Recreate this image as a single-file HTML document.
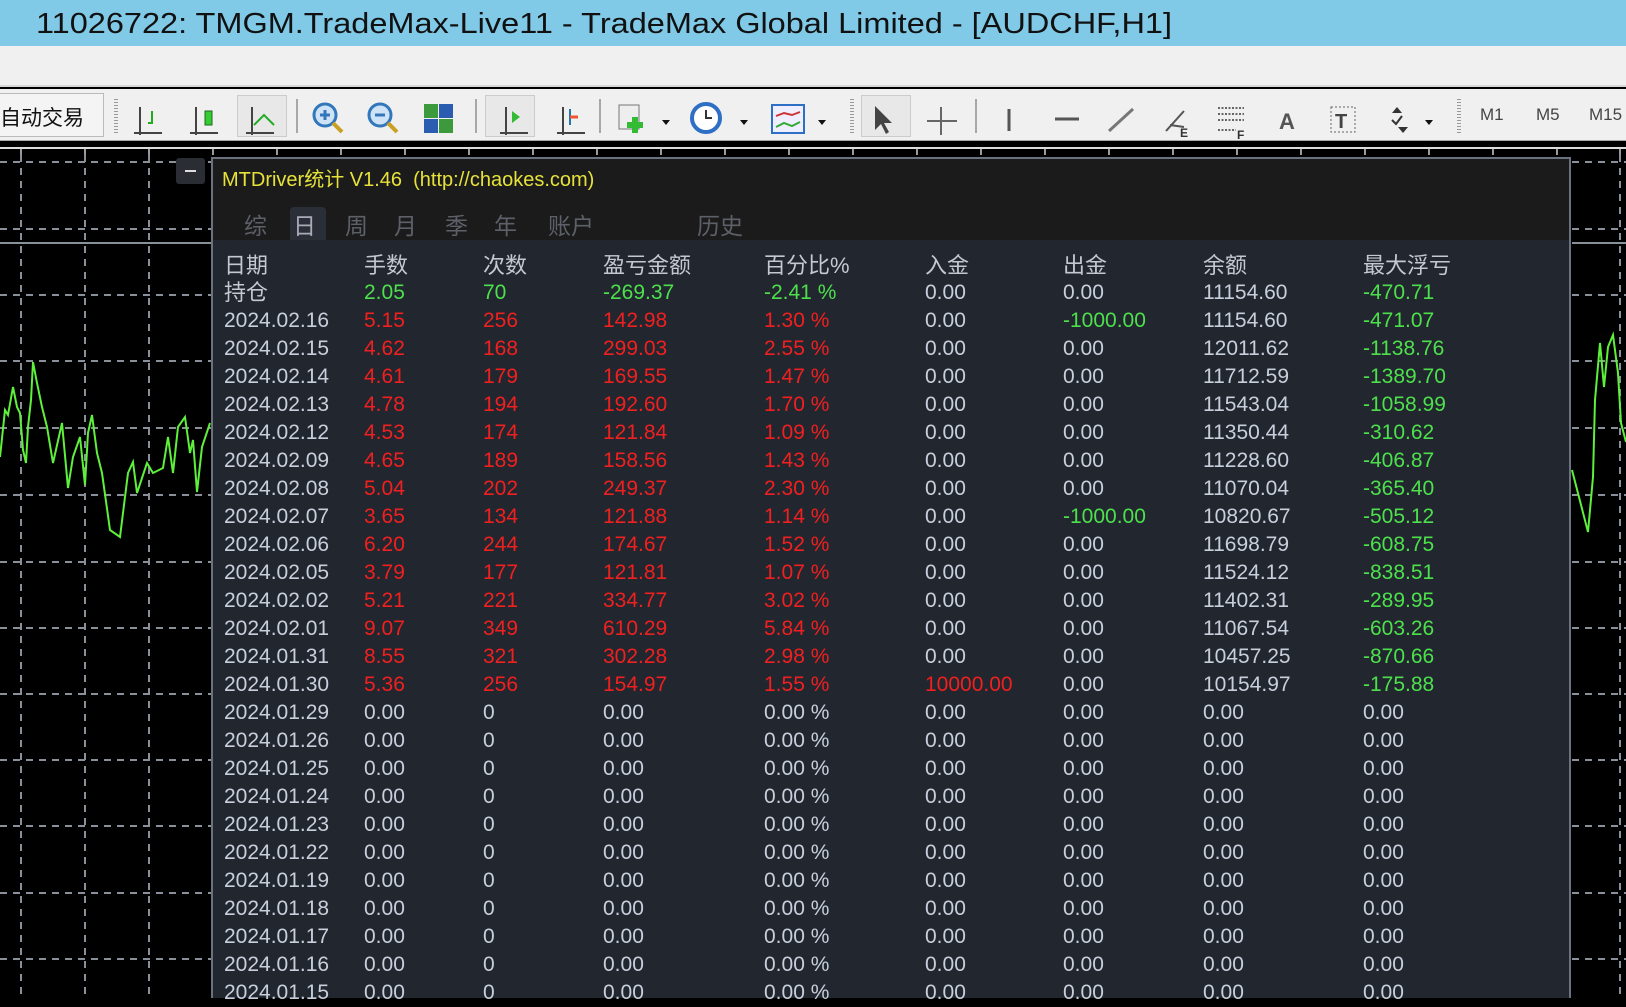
<!DOCTYPE html>
<html><head><meta charset="utf-8">
<style>
*{margin:0;padding:0;box-sizing:border-box}
body{width:1626px;height:998px;overflow:hidden;background:#000;position:relative;font-family:"Liberation Sans","Noto Sans CJK SC",sans-serif}
#title{position:absolute;left:0;top:0;width:1626px;height:46px;background:#80c9e7}
#menu{position:absolute;left:0;top:46px;width:1626px;height:41px;background:#f0f0f0;border-bottom:2px solid #d8d8d8}
#tb{position:absolute;left:0;top:89px;width:1626px;height:52px;background:#f0f0f0;border-bottom:1px solid #aaa}
.sep{position:absolute;top:10px;width:2px;height:34px;background:#a8a8a8}
.grip{position:absolute;top:10px;width:4px;height:36px;background:repeating-linear-gradient(#999 0 1px,transparent 1px 3px)}
.press{position:absolute;top:6px;width:50px;height:42px;border:1px solid #ccc;background:#e8e8e8}
.ic{position:absolute;top:0}
.mt{position:absolute;top:16px;font-size:17px;color:#444}
#panel{position:absolute;left:211px;top:157px;width:1360px;height:841px;background:#22262e;border-left:2px solid #6a7280;border-top:2px solid #6a7280;border-right:2px solid #6a7280}
#phead{position:absolute;left:0;top:0;width:100%;height:81px;background:#1b1b1b}
#ptitle{position:absolute;left:9px;top:4px;font-size:20px;color:#e6e23a;white-space:nowrap}
.tab{position:absolute;top:48px;font-size:23px;color:#5d6068}
.row{position:absolute;left:0;height:28px;line-height:28px;font-size:21px;color:#c8cfdc;white-space:nowrap}
.row span{position:absolute;top:0}
.c0{left:11px}.c1{left:151px}.c2{left:270px}.c3{left:390px}.c4{left:551px}.c5{left:712px}.c6{left:850px}.c7{left:990px}.c8{left:1150px}
.r{color:#f02020}.g{color:#4de04d}.h{color:#c4c8d0;font-size:22px}
</style></head><body>
<div id="title"><svg width="1626" height="46"><text x="36" y="33" font-family="Liberation Sans" font-size="29" fill="#111" textLength="1136" lengthAdjust="spacingAndGlyphs">11026722: TMGM.TradeMax-Live11 - TradeMax Global Limited - [AUDCHF,H1]</text></svg></div>
<div id="menu"></div>
<div id="tb">
 <div style="position:absolute;left:0;top:4px;width:104px;height:44px;border:1px solid #bbb;border-left:none;background:#f4f4f4"></div>
 <div style="position:absolute;left:0;top:13px;font-size:21px;color:#111">自动交易</div>
 <div class="grip" style="left:114px"></div>
 <div class="press" style="left:237px"></div>
 <div class="sep" style="left:296px"></div>
 <div class="sep" style="left:475px"></div>
 <div class="press" style="left:485px"></div>
 <div class="sep" style="left:599px"></div>
 <div class="grip" style="left:850px"></div>
 <div class="press" style="left:861px"></div>
 <div class="sep" style="left:975px"></div>
 <div class="grip" style="left:1457px"></div>
 <svg class="ic" width="1626" height="52">
  <g stroke="#444" stroke-width="2" fill="none">
   <path d="M140 18v28M134 44h28"/><path d="M196 18v28M190 44h28"/><path d="M252 18v28M246 44h28"/>
   <path d="M506 18v28M500 44h28"/><path d="M563 18v28M557 44h28"/>
   <path d="M1009 20v22" stroke="#555" stroke-width="3"/><path d="M1055 30h24" stroke="#555" stroke-width="3"/>
   <path d="M1109 42l24 -22" stroke="#777" stroke-width="3"/>
   <path d="M941 18v28M927 32h30" stroke="#666"/>
  </g>
  <path d="M152 22v12h-4" stroke="#2a2" stroke-width="2" fill="none"/>
  <rect x="205" y="22" width="7" height="14" fill="#3c3" stroke="#262"/>
  <path d="M254 36l10-10 10 10" stroke="#2a2" stroke-width="2" fill="none"/>
  <circle cx="325" cy="26" r="11" fill="#cfe3f6" stroke="#3377bb" stroke-width="3"/><path d="M320 26h10M325 21v10" stroke="#3377bb" stroke-width="3"/><path d="M333 34l9 9" stroke="#c9a020" stroke-width="4"/>
  <circle cx="380" cy="26" r="11" fill="#cfe3f6" stroke="#3377bb" stroke-width="3"/><path d="M375 26h10" stroke="#3377bb" stroke-width="3"/><path d="M388 34l9 9" stroke="#c9a020" stroke-width="4"/>
  <rect x="424" y="15" width="14" height="14" fill="#3c9a3c"/><rect x="439" y="15" width="14" height="14" fill="#2a5db0"/><rect x="424" y="30" width="14" height="14" fill="#2a5db0"/><rect x="439" y="30" width="14" height="14" fill="#3c9a3c"/>
  <path d="M512 22l8 6-8 6z" fill="#3b3"/>
  <path d="M570 20v16" stroke="#27a" stroke-width="2"/><path d="M578 28h-8" stroke="#e53" stroke-width="3"/>
  <rect x="619" y="16" width="20" height="24" fill="#eee" stroke="#777"/><path d="M635 28v16M627 36h16" stroke="#3b3" stroke-width="6"/>
  <path d="M662 31l4 5 4-5z M740 31l4 5 4-5z M818 31l4 5 4-5z M1425 31l4 5 4-5z" fill="#111"/>
  <circle cx="706" cy="29" r="14" fill="#fff" stroke="#2d6fc4" stroke-width="4"/><path d="M706 21v8h6" stroke="#333" stroke-width="2" fill="none"/>
  <rect x="772" y="16" width="32" height="28" fill="#eef" stroke="#2d6fc4" stroke-width="2"/><path d="M776 27l8-3 8 2 8-3" stroke="#c33" stroke-width="2" fill="none"/><path d="M776 38l8-4 8 3 8-4" stroke="#3a3" stroke-width="2" fill="none"/>
  <path d="M875 17v24l6-6 5 10 3-2-5-9h8z" fill="#444"/>
  <path d="M1166 42l18-20M1170 36l14 2" stroke="#555" stroke-width="2"/><text x="1180" y="48" font-size="12" fill="#333" font-weight="bold">E</text>
  <path d="M1218 19h26M1218 25h26M1218 31h26M1218 41h18" stroke="#666" stroke-dasharray="2 1.5" stroke-width="2"/><text x="1237" y="50" font-size="12" fill="#333" font-weight="bold">F</text>
  <text x="1279" y="40" font-size="22" font-weight="bold" fill="#555">A</text>
  <rect x="1331" y="18" width="24" height="25" fill="none" stroke="#666" stroke-dasharray="2 2"/><text x="1335" y="39" font-size="20" font-weight="bold" fill="#444">T</text>
  <path d="M1392 24l5-6 5 6zM1398 38l5 6 5-6z" fill="#333"/><path d="M1392 31l4 4 6-8" stroke="#333" stroke-width="2" fill="none"/>
 </svg>
 <div class="mt" style="left:1480px">M1</div><div class="mt" style="left:1536px">M5</div><div class="mt" style="left:1589px">M15</div>
</div>
<svg style="position:absolute;left:0;top:141px" width="1626" height="857">
 <rect width="1626" height="857" fill="#000"/>
 <line x1="0" y1="7" x2="1626" y2="7" stroke="#ddd" stroke-width="2"/>
 <g stroke="#ccc" stroke-width="1.5">
  <path d="M21 8v6M85 8v6M149 8v6M213 8v6M277 8v6M341 8v6M405 8v6M469 8v6M533 8v6M597 8v6M661 8v6M725 8v6M789 8v6M853 8v6M917 8v6M981 8v6M1045 8v6M1109 8v6M1173 8v6M1237 8v6M1301 8v6M1365 8v6M1429 8v6M1493 8v6M1557 8v6M1620 8v6"/>
 </g>
 <g stroke="#8a909a" stroke-width="2" stroke-dasharray="7 6">
  <path d="M21 14V857M85 14V857M149 14V857M1620 14V857"/>
  <path d="M0 21H211M0 88H211M0 154H211M0 220H211M0 287H211M0 354H211M0 421H211M0 487H211M0 553H211M0 619H211M0 685H211M0 752H211M0 818H211"/>
  <path d="M1572 21H1626M1572 88H1626M1572 154H1626M1572 220H1626M1572 287H1626M1572 354H1626M1572 421H1626M1572 487H1626M1572 553H1626M1572 619H1626M1572 685H1626M1572 752H1626M1572 818H1626"/>
 </g>
 <path d="M0 102H211M1572 102H1626" stroke="#8a909a" stroke-width="2"/>
 <polyline transform="translate(0,-141)" fill="none" stroke="#5ef03a" stroke-width="2" points="0,457 5,410 8,415 13,387 17,407 20,413 23,450 26,463 28,427 31,400 33,362 37,383 42,407 47,427 53,463 62,423 68,488 73,457 80,437 85,485 88,433 92,415 97,453 102,473 110,530 120,537 128,473 133,462 137,493 147,463 153,473 163,468 168,437 173,473 178,427 185,417 190,453 193,440 197,492 202,447 210,423"/>
 <polyline transform="translate(0,-141)" fill="none" stroke="#5ef03a" stroke-width="2" points="1572,470 1588,532 1593,477 1595,400 1600,343 1604,387 1608,347 1613,335 1618,373 1621,423 1626,442"/>
</svg>
<div style="position:absolute;left:176px;top:158px;width:29px;height:26px;background:#2a2d33;border-radius:3px"><div style="position:absolute;left:9px;top:12px;width:11px;height:2px;background:#ddd"></div></div>
<div id="panel">
 <div id="phead">
  <div id="ptitle">MTDriver统计 V1.46&nbsp;&nbsp;(http://chaokes.com)</div>
  <div style="position:absolute;left:77px;top:48px;width:36px;height:33px;background:#2a2e36;border-radius:4px 4px 0 0"></div>
  <div class="tab" style="left:31px">综</div><div class="tab" style="left:80px;color:#aab">日</div><div class="tab" style="left:132px">周</div><div class="tab" style="left:181px">月</div><div class="tab" style="left:232px">季</div><div class="tab" style="left:281px">年</div><div class="tab" style="left:335px">账户</div><div class="tab" style="left:484px">历史</div>
 </div>
 <div class="row h" style="top:93px"><span class="c0">日期</span><span class="c1">手数</span><span class="c2">次数</span><span class="c3">盈亏金额</span><span class="c4">百分比%</span><span class="c5">入金</span><span class="c6">出金</span><span class="c7">余额</span><span class="c8">最大浮亏</span></div>
 <div class="row" style="top:120px"><span class="c0 h">持仓</span><span class="c1 g">2.05</span><span class="c2 g">70</span><span class="c3 g">-269.37</span><span class="c4 g">-2.41 %</span><span class="c5">0.00</span><span class="c6">0.00</span><span class="c7">11154.60</span><span class="c8 g">-470.71</span></div>
 <div class="row" style="top:148px"><span class="c0">2024.02.16</span><span class="c1 r">5.15</span><span class="c2 r">256</span><span class="c3 r">142.98</span><span class="c4 r">1.30 %</span><span class="c5">0.00</span><span class="c6 g">-1000.00</span><span class="c7">11154.60</span><span class="c8 g">-471.07</span></div>
 <div class="row" style="top:176px"><span class="c0">2024.02.15</span><span class="c1 r">4.62</span><span class="c2 r">168</span><span class="c3 r">299.03</span><span class="c4 r">2.55 %</span><span class="c5">0.00</span><span class="c6">0.00</span><span class="c7">12011.62</span><span class="c8 g">-1138.76</span></div>
 <div class="row" style="top:204px"><span class="c0">2024.02.14</span><span class="c1 r">4.61</span><span class="c2 r">179</span><span class="c3 r">169.55</span><span class="c4 r">1.47 %</span><span class="c5">0.00</span><span class="c6">0.00</span><span class="c7">11712.59</span><span class="c8 g">-1389.70</span></div>
 <div class="row" style="top:232px"><span class="c0">2024.02.13</span><span class="c1 r">4.78</span><span class="c2 r">194</span><span class="c3 r">192.60</span><span class="c4 r">1.70 %</span><span class="c5">0.00</span><span class="c6">0.00</span><span class="c7">11543.04</span><span class="c8 g">-1058.99</span></div>
 <div class="row" style="top:260px"><span class="c0">2024.02.12</span><span class="c1 r">4.53</span><span class="c2 r">174</span><span class="c3 r">121.84</span><span class="c4 r">1.09 %</span><span class="c5">0.00</span><span class="c6">0.00</span><span class="c7">11350.44</span><span class="c8 g">-310.62</span></div>
 <div class="row" style="top:288px"><span class="c0">2024.02.09</span><span class="c1 r">4.65</span><span class="c2 r">189</span><span class="c3 r">158.56</span><span class="c4 r">1.43 %</span><span class="c5">0.00</span><span class="c6">0.00</span><span class="c7">11228.60</span><span class="c8 g">-406.87</span></div>
 <div class="row" style="top:316px"><span class="c0">2024.02.08</span><span class="c1 r">5.04</span><span class="c2 r">202</span><span class="c3 r">249.37</span><span class="c4 r">2.30 %</span><span class="c5">0.00</span><span class="c6">0.00</span><span class="c7">11070.04</span><span class="c8 g">-365.40</span></div>
 <div class="row" style="top:344px"><span class="c0">2024.02.07</span><span class="c1 r">3.65</span><span class="c2 r">134</span><span class="c3 r">121.88</span><span class="c4 r">1.14 %</span><span class="c5">0.00</span><span class="c6 g">-1000.00</span><span class="c7">10820.67</span><span class="c8 g">-505.12</span></div>
 <div class="row" style="top:372px"><span class="c0">2024.02.06</span><span class="c1 r">6.20</span><span class="c2 r">244</span><span class="c3 r">174.67</span><span class="c4 r">1.52 %</span><span class="c5">0.00</span><span class="c6">0.00</span><span class="c7">11698.79</span><span class="c8 g">-608.75</span></div>
 <div class="row" style="top:400px"><span class="c0">2024.02.05</span><span class="c1 r">3.79</span><span class="c2 r">177</span><span class="c3 r">121.81</span><span class="c4 r">1.07 %</span><span class="c5">0.00</span><span class="c6">0.00</span><span class="c7">11524.12</span><span class="c8 g">-838.51</span></div>
 <div class="row" style="top:428px"><span class="c0">2024.02.02</span><span class="c1 r">5.21</span><span class="c2 r">221</span><span class="c3 r">334.77</span><span class="c4 r">3.02 %</span><span class="c5">0.00</span><span class="c6">0.00</span><span class="c7">11402.31</span><span class="c8 g">-289.95</span></div>
 <div class="row" style="top:456px"><span class="c0">2024.02.01</span><span class="c1 r">9.07</span><span class="c2 r">349</span><span class="c3 r">610.29</span><span class="c4 r">5.84 %</span><span class="c5">0.00</span><span class="c6">0.00</span><span class="c7">11067.54</span><span class="c8 g">-603.26</span></div>
 <div class="row" style="top:484px"><span class="c0">2024.01.31</span><span class="c1 r">8.55</span><span class="c2 r">321</span><span class="c3 r">302.28</span><span class="c4 r">2.98 %</span><span class="c5">0.00</span><span class="c6">0.00</span><span class="c7">10457.25</span><span class="c8 g">-870.66</span></div>
 <div class="row" style="top:512px"><span class="c0">2024.01.30</span><span class="c1 r">5.36</span><span class="c2 r">256</span><span class="c3 r">154.97</span><span class="c4 r">1.55 %</span><span class="c5 r">10000.00</span><span class="c6">0.00</span><span class="c7">10154.97</span><span class="c8 g">-175.88</span></div>
 <div class="row" style="top:540px"><span class="c0">2024.01.29</span><span class="c1">0.00</span><span class="c2">0</span><span class="c3">0.00</span><span class="c4">0.00 %</span><span class="c5">0.00</span><span class="c6">0.00</span><span class="c7">0.00</span><span class="c8">0.00</span></div>
 <div class="row" style="top:568px"><span class="c0">2024.01.26</span><span class="c1">0.00</span><span class="c2">0</span><span class="c3">0.00</span><span class="c4">0.00 %</span><span class="c5">0.00</span><span class="c6">0.00</span><span class="c7">0.00</span><span class="c8">0.00</span></div>
 <div class="row" style="top:596px"><span class="c0">2024.01.25</span><span class="c1">0.00</span><span class="c2">0</span><span class="c3">0.00</span><span class="c4">0.00 %</span><span class="c5">0.00</span><span class="c6">0.00</span><span class="c7">0.00</span><span class="c8">0.00</span></div>
 <div class="row" style="top:624px"><span class="c0">2024.01.24</span><span class="c1">0.00</span><span class="c2">0</span><span class="c3">0.00</span><span class="c4">0.00 %</span><span class="c5">0.00</span><span class="c6">0.00</span><span class="c7">0.00</span><span class="c8">0.00</span></div>
 <div class="row" style="top:652px"><span class="c0">2024.01.23</span><span class="c1">0.00</span><span class="c2">0</span><span class="c3">0.00</span><span class="c4">0.00 %</span><span class="c5">0.00</span><span class="c6">0.00</span><span class="c7">0.00</span><span class="c8">0.00</span></div>
 <div class="row" style="top:680px"><span class="c0">2024.01.22</span><span class="c1">0.00</span><span class="c2">0</span><span class="c3">0.00</span><span class="c4">0.00 %</span><span class="c5">0.00</span><span class="c6">0.00</span><span class="c7">0.00</span><span class="c8">0.00</span></div>
 <div class="row" style="top:708px"><span class="c0">2024.01.19</span><span class="c1">0.00</span><span class="c2">0</span><span class="c3">0.00</span><span class="c4">0.00 %</span><span class="c5">0.00</span><span class="c6">0.00</span><span class="c7">0.00</span><span class="c8">0.00</span></div>
 <div class="row" style="top:736px"><span class="c0">2024.01.18</span><span class="c1">0.00</span><span class="c2">0</span><span class="c3">0.00</span><span class="c4">0.00 %</span><span class="c5">0.00</span><span class="c6">0.00</span><span class="c7">0.00</span><span class="c8">0.00</span></div>
 <div class="row" style="top:764px"><span class="c0">2024.01.17</span><span class="c1">0.00</span><span class="c2">0</span><span class="c3">0.00</span><span class="c4">0.00 %</span><span class="c5">0.00</span><span class="c6">0.00</span><span class="c7">0.00</span><span class="c8">0.00</span></div>
 <div class="row" style="top:792px"><span class="c0">2024.01.16</span><span class="c1">0.00</span><span class="c2">0</span><span class="c3">0.00</span><span class="c4">0.00 %</span><span class="c5">0.00</span><span class="c6">0.00</span><span class="c7">0.00</span><span class="c8">0.00</span></div>
 <div class="row" style="top:820px"><span class="c0">2024.01.15</span><span class="c1">0.00</span><span class="c2">0</span><span class="c3">0.00</span><span class="c4">0.00 %</span><span class="c5">0.00</span><span class="c6">0.00</span><span class="c7">0.00</span><span class="c8">0.00</span></div>
</div>
</body></html>
